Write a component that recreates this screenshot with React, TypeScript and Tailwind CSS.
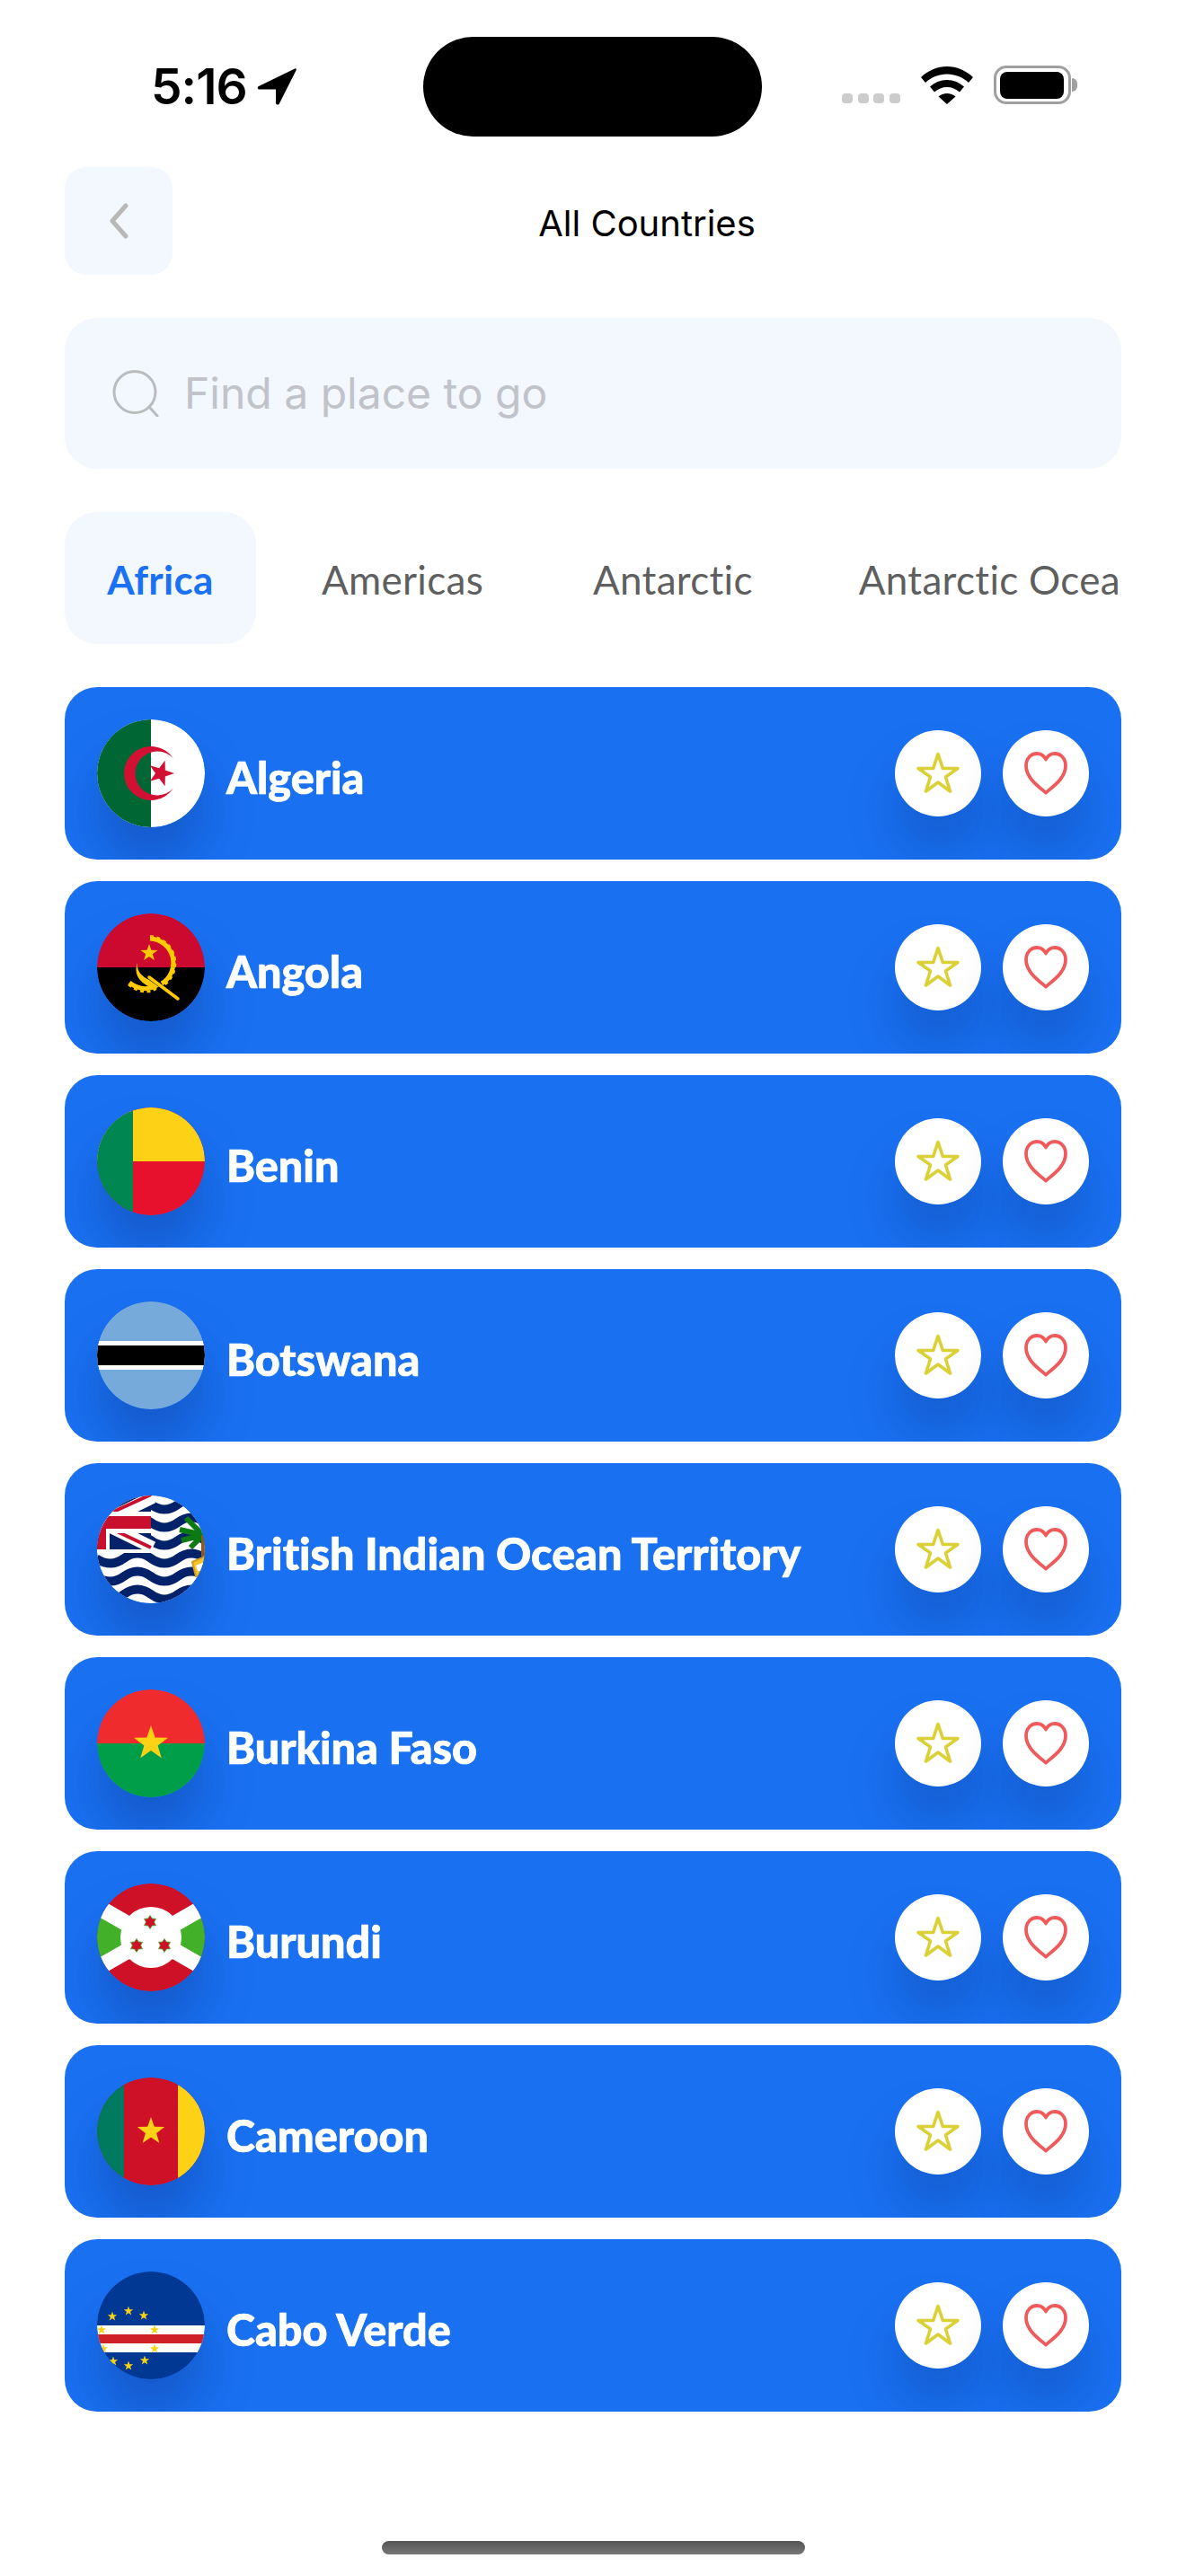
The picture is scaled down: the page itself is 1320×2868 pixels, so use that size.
import type { ReactNode } from "react";

const font = "font-['Lato','Liberation_Sans',sans-serif]";

function Star({ x, y, r, fill, rot = -90 }: { x: number; y: number; r: number; fill: string; rot?: number }) {
  const pts = Array.from({ length: 10 }, (_, i) => {
    const a = (Math.PI / 5) * i + (rot * Math.PI) / 180;
    const rad = i % 2 === 0 ? r : r * 0.4;
    return `${(x + rad * Math.cos(a)).toFixed(2)},${(y + rad * Math.sin(a)).toFixed(2)}`;
  }).join(" ");
  return <polygon points={pts} fill={fill} />;
}

function SixStar({ x, y }: { x: number; y: number }) {
  const pts = Array.from({ length: 12 }, (_, i) => {
    const a = (Math.PI / 6) * i - Math.PI / 2;
    const rad = i % 2 === 0 ? 7.5 : 4.6;
    return `${(x + rad * Math.cos(a)).toFixed(2)},${(y + rad * Math.sin(a)).toFixed(2)}`;
  }).join(" ");
  return <polygon points={pts} fill="#ce1126" stroke="#43b02a" strokeWidth="0.8" />;
}

function Algeria() {
  return (
    <>
      <rect width="120" height="120" fill="#ffffff" />
      <rect width="60" height="120" fill="#006633" />
      <path d="M85 43.400A30 30 0 1 0 85 76.600A24.500 24.500 0 1 1 85 43.400Z" fill="#d21034" />
      <Star x={71} y={60} r={15} fill="#d21034" rot={0} />
    </>
  );
}

function Angola() {
  return (
    <>
      <rect width="120" height="60" fill="#cc092f" />
      <rect y="60" width="120" height="60" fill="#000000" />
      <Star x={58} y={44} r={10} fill="#ffcb00" />
      <path d="M59 28A27 27 0 0 1 72 78" fill="none" stroke="#ffcb00" strokeWidth="5" />
      <path d="M59 25.500A30 30 0 0 1 74 80" fill="none" stroke="#ffcb00" strokeWidth="3" strokeDasharray="4 3.500" />
      <path d="M36 77Q50 88 66 81" fill="none" stroke="#ffcb00" strokeWidth="5" />
      <path d="M35 79Q50 92 66 84" fill="none" stroke="#ffcb00" strokeWidth="2.500" strokeDasharray="4 3.500" />
      <path d="M45 55C44 65 50 70 58 74L69 82L62 83C48 78 40 68 45 55Z" fill="#ffcb00" />
      <path d="M58 71L90 95" fill="none" stroke="#ffcb00" strokeWidth="3.500" strokeLinecap="round" />
    </>
  );
}

function Benin() {
  return (
    <>
      <rect width="120" height="120" fill="#e8112d" />
      <rect width="120" height="60" fill="#fcd116" />
      <rect width="40" height="120" fill="#008751" />
    </>
  );
}

function Botswana() {
  return (
    <>
      <rect width="120" height="120" fill="#75aadb" />
      <rect y="44" width="120" height="32" fill="#ffffff" />
      <rect y="49" width="120" height="22" fill="#000000" />
    </>
  );
}

function Biot() {
  const waves = [10, 30, 50, 70, 90, 110, 130];
  return (
    <>
      <rect width="120" height="120" fill="#ffffff" />
      {waves.map((y) => (
        <path
          key={y}
          d={`M-1 ${y}Q15 ${y + 11} 30 ${y}T60 ${y}T90 ${y}T120 ${y}T150 ${y}`}
          fill="none"
          stroke="#012169"
          strokeWidth="10"
        />
      ))}
      <rect width="60" height="64" fill="#ffffff" />
      <rect width="60" height="60" fill="#012169" />
      <path d="M5 30L62 2M5 30L62 58" stroke="#ffffff" strokeWidth="14" />
      <path d="M12 21L60 -1M20 39L60 58" stroke="#c8102e" strokeWidth="4" />
      <rect y="18" width="60" height="24" fill="#ffffff" />
      <rect y="23" width="60" height="14" fill="#c8102e" />
      <rect x="10" y="37" width="4" height="23" fill="#ffffff" />
      <rect y="36" width="10" height="24" fill="#c8102e" />
      <path d="M118 44L99 25M118 44L92 38M118 44L104 58M118 44L94 50" stroke="#0b7a12" strokeWidth="6" fill="none" />
      <rect x="116" y="44" width="4" height="24" fill="#8a5a1c" />
      <path d="M106 74L120 68V92L110 90Z" fill="#f4c430" stroke="#d89b1c" strokeWidth="2" />
      <path d="M110 78L120 74V84L112 84Z" fill="#ffffff" />
    </>
  );
}

function BurkinaFaso() {
  return (
    <>
      <rect width="120" height="60" fill="#ef2b2d" />
      <rect y="60" width="120" height="60" fill="#009e49" />
      <Star x={60} y={60} r={20} fill="#fcd116" />
    </>
  );
}

function Burundi() {
  return (
    <>
      <rect width="120" height="120" fill="#ce1126" />
      <path d="M-10 20L60 60L-10 100Z" fill="#43b02a" />
      <path d="M130 20L60 60L130 100Z" fill="#43b02a" />
      <path d="M-10 20L130 100M-10 100L130 20" stroke="#ffffff" strokeWidth="18" />
      <circle cx="60" cy="60" r="34" fill="#ffffff" />
      <SixStar x={59} y={43} />
      <SixStar x={44} y={69} />
      <SixStar x={75} y={69} />
    </>
  );
}

function Cameroon() {
  return (
    <>
      <rect width="120" height="120" fill="#ce1126" />
      <rect width="30" height="120" fill="#007a5e" />
      <rect x="90" width="30" height="120" fill="#fcd116" />
      <Star x={60} y={60} r={16} fill="#fcd116" />
    </>
  );
}

function CaboVerde() {
  const stars = [[17, 50], [35, 44], [52, 49], [5, 65], [64, 65], [7, 86], [64, 86], [18, 100], [35, 105], [53, 99]];
  return (
    <>
      <rect width="120" height="120" fill="#003893" />
      <rect y="60" width="120" height="30" fill="#ffffff" />
      <rect y="70" width="120" height="10" fill="#cf2027" />
      {stars.map(([x, y]) => (
        <Star key={`${x}-${y}`} x={x} y={y} r={5.5} fill="#f7d116" />
      ))}
    </>
  );
}

const countries: { name: string; flag: ReactNode }[] = [
  { name: "Algeria", flag: <Algeria /> },
  { name: "Angola", flag: <Angola /> },
  { name: "Benin", flag: <Benin /> },
  { name: "Botswana", flag: <Botswana /> },
  { name: "British Indian Ocean Territory", flag: <Biot /> },
  { name: "Burkina Faso", flag: <BurkinaFaso /> },
  { name: "Burundi", flag: <Burundi /> },
  { name: "Cameroon", flag: <Cameroon /> },
  { name: "Cabo Verde", flag: <CaboVerde /> },
];

function StatusBar() {
  return (
    <div className="flex h-[186px] items-start">
      <div className="flex w-[471px] items-center pt-[69px] pl-[168px]">
        <span className="font-['Inter',sans-serif] text-[55px] leading-[54px] font-semibold tracking-[-1px] text-black">5:16</span>
        <svg viewBox="0 0 44 42" className="ml-[11px] h-[42px] w-[44px]">
          <path d="M42 1.500 2 21c-2 1-1.400 3.600.8 3.600H21v15c0 2.200 2.800 2.800 3.800.8L43.600 3.200c.7-1.300-.4-2.400-1.600-1.700Z" fill="#000" />
        </svg>
      </div>
      <div className="mt-[41px] h-[111px] w-[377px] rounded-[56px] bg-black" />
      <div className="flex flex-1 items-end gap-[23px] pt-[73px] pl-[89px]">
        <div className="flex gap-[5.670px] pb-[1px]">
          {[0, 1, 2, 3].map((i) => (
            <span key={i} className="h-[11px] w-[12px] rounded-[4px] bg-[#cccccc]" />
          ))}
        </div>
        <svg viewBox="0 0 58 42" className="h-[42px] w-[58px]">
          <path d="M29 0C18 0 8 4.500 0 12l5 6c6.500-6 15-9.500 24-9.500S46.500 12 53 18l5-6C50 4.500 40 0 29 0Z" fill="#000" />
          <path d="M29 15c-7.500 0-14 3-19 7.500l5 6C19 25 23.800 23 29 23s10 2 14 5.500l5-6C43 18 36.500 15 29 15Z" fill="#000" />
          <path d="M29 30c-3.500 0-7 1.200-9.500 3.500L29 42l9.500-8.500C36 31.200 32.500 30 29 30Z" fill="#000" />
        </svg>
        <div className="flex items-center">
          <div className="flex h-[43px] w-[86px] items-center justify-center rounded-[14px] border-[3px] border-[#a0a0a0]">
            <div className="h-[30px] w-[71px] rounded-[8px] bg-black" />
          </div>
          <div className="ml-[1px] h-[15px] w-[6px] rounded-r-full bg-[#a0a0a0]" />
        </div>
      </div>
    </div>
  );
}

function CountryRow({ name, flag }: { name: string; flag: ReactNode }) {
  return (
    <div className="flex h-[192px] items-center overflow-hidden rounded-[36px] bg-[#1971f2] px-[36px]">
      <svg
        viewBox="0 0 120 120"
        className="h-[120px] w-[120px] shrink-0 rounded-full shadow-[0_40px_56px_rgba(10,30,100,0.28)]"
      >
        <defs>
          <clipPath id={`flag-${name.replace(/ /g, "-")}`}>
            <circle cx="60" cy="60" r="60" />
          </clipPath>
        </defs>
        <g clipPath={`url(#flag-${name.replace(/ /g, "-")})`}>{flag}</g>
      </svg>
      <span className="ml-[24px] flex-1 pt-[8px] text-[48.500px] leading-[56px] font-black text-white [-webkit-text-stroke:0.7px_white] [font-variant-ligatures:none]">{name}</span>
      <div className="flex gap-[24px]">
        <button className="grid h-[96px] w-[96px] place-items-center rounded-full bg-white shadow-[0_40px_56px_rgba(10,30,100,0.24)]">
          <svg viewBox="0 0 48 48" className="h-[48px] w-[48px]" fill="none">
            <path
              d="M24 2.500 29.300 18.500H46L32.500 28 37.500 44 24 34 10.500 44 15.500 28 2 18.500H18.700Z"
              stroke="#dbd035"
              strokeWidth="3.600"
              strokeLinejoin="round"
            />
          </svg>
        </button>
        <button className="grid h-[96px] w-[96px] place-items-center rounded-full bg-white shadow-[0_40px_56px_rgba(10,30,100,0.24)]">
          <svg viewBox="0 0 48 48" className="h-[48px] w-[48px]" fill="none">
            <path
              d="M24 45.500C15 38 2 29 2 15.500 2 7.500 7.500 2 14 2c4.500 0 8 2.500 10 6.500C26 4.500 29.500 2 34 2c6.500 0 12 5.500 12 13.500C46 29 33 38 24 45.500Z"
              stroke="#f05a5a"
              strokeWidth="3.800"
              strokeLinejoin="round"
            />
          </svg>
        </button>
      </div>
    </div>
  );
}

export default function App() {
  return (
    <div className={`flex h-[2868px] w-[1320px] flex-col overflow-hidden bg-white ${font}`}>
      <StatusBar />

      <div className="flex flex-col px-[72px]">
        <div className="flex h-[120px] items-center">
          <button className="grid h-[120px] w-[120px] place-items-center rounded-[24px] bg-[#f3f7fe]">
            <svg viewBox="0 0 24 40" className="h-[40px] w-[24px]" fill="none">
              <path d="M20 3 5 20l15 17" stroke="#b8b8b8" strokeWidth="5" strokeLinecap="round" strokeLinejoin="round" />
            </svg>
          </button>
          <h1 className="flex-1 pt-[6px] text-center font-['Inter',sans-serif] text-[40px] leading-[48px] font-normal text-black">All Countries</h1>
        </div>

        <div className="mt-[48px] flex h-[168px] items-center rounded-[36px] bg-[#f3f7fe] pl-[53px]">
          <svg viewBox="0 0 52 52" className="h-[52px] w-[52px]" fill="none">
            <circle cx="25" cy="24.500" r="23" stroke="#b9bbbd" strokeWidth="3" />
            <path d="M41 41l9 10" stroke="#b9bbbd" strokeWidth="3" strokeLinecap="round" />
          </svg>
          <span className="ml-[28px] font-['Inter',sans-serif] text-[48px] leading-[60px] text-[#c0c3ca]">Find a place to go</span>
        </div>

        <div className="mt-[48px] flex h-[147px] items-center overflow-hidden text-[44px] leading-[50px] tracking-[0.3px] whitespace-nowrap text-[#5f5f5f] [font-variant-ligatures:none]">
          <div className="flex h-full w-[213px] shrink-0 items-center justify-center rounded-[36px] bg-[#f3f7fe] pt-[2px] font-bold text-[#1a72f3]">Africa</div>
          <span className="ml-[73px] shrink-0 pt-[2px]">Americas</span>
          <span className="ml-[122px] shrink-0 pt-[2px]">Antarctic</span>
          <span className="ml-[118px] shrink-0 pt-[2px]">Antarctic Ocean</span>
        </div>

        <div className="mt-[48px] flex flex-col gap-[24px]">
          {countries.map((c) => (
            <CountryRow key={c.name} name={c.name} flag={c.flag} />
          ))}
        </div>
      </div>

      <div className="mt-auto mb-[24px] h-[15px] w-[471px] self-center rounded-full bg-gradient-to-b from-[#555555] to-[#777777]" />
    </div>
  );
}
